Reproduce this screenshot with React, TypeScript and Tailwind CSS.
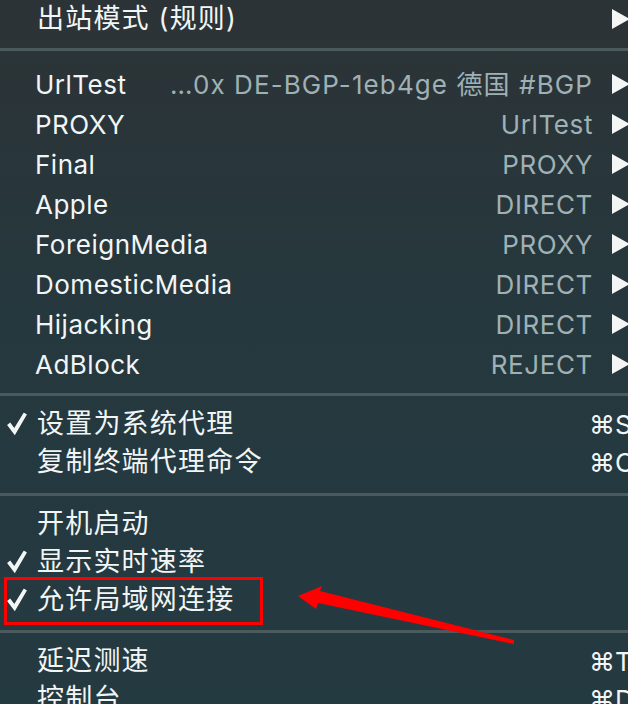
import React from "react";

const FONT = { fontFamily: 'Inter, "Noto Sans CJK SC", "Noto Sans", sans-serif' };

function Check() {
  return (
    <svg width="20" height="23" viewBox="0 0 19 22" className="absolute left-[7px] top-1/2 -translate-y-1/2">
      <path d="M0 12 L3 9.6 L6.9 14.8 L16 0 L19 1.9 L7.4 21.8 Z" fill="#f4f6f6" />
    </svg>
  );
}

function Tri() {
  return (
    <svg width="18" height="20" viewBox="0 0 18 20" className="shrink-0">
      <path d="M0 0 L18 10 L0 20 Z" fill="#f4f6f6" />
    </svg>
  );
}

function Sep({ mt, mb }: { mt: string; mb: string }) {
  return <div className={`h-[3px] bg-[#4b5a5d] ${mt} ${mb}`} />;
}

function ProxyRow({ label, value, wide }: { label: string; value: string; wide?: boolean }) {
  return (
    <div className="flex h-[40px] items-center">
      <div className="w-[35px] shrink-0" />
      <span className="text-[26px] text-[#f2f5f5] whitespace-nowrap tracking-[0.5px]">{label}</span>
      <div className="flex-1" />
      <span
        className={`text-[26px] text-[#9fb1b4] whitespace-nowrap ${wide ? "tracking-[1.1px]" : "tracking-[0.6px]"}`}
      >
        {value}
      </span>
      <div className="w-[19px] shrink-0" />
      <Tri />
      <div className="w-[30px] shrink-0" />
    </div>
  );
}

function CnRow({ label, checked, shortcut }: { label: string; checked?: boolean; shortcut?: string }) {
  return (
    <div className="relative flex h-[38px] items-center">
      {checked && <Check />}
      <div className="w-[37px] shrink-0" />
      <span className="text-[27px] text-[#f2f5f5] whitespace-nowrap tracking-[1.2px]">{label}</span>
      <div className="flex-1" />
      {shortcut && (
        <span className="w-[71px] shrink-0 text-[26px] text-[#f2f5f5] whitespace-nowrap">{shortcut}</span>
      )}
      {!shortcut && <div className="w-[71px] shrink-0" />}
    </div>
  );
}

export default function App() {
  return (
    <div
      className="relative w-[628px] h-[704px] overflow-hidden bg-gradient-to-b from-[#2c3336] via-[#25383e] via-45% to-[#243a41]"
      style={FONT}
    >
      <div className="w-[660px] flex flex-col">
        {/* top row */}
        <div className="flex h-[38px] items-center">
          <div className="w-[37px] shrink-0" />
          <span className="text-[27px] text-[#f2f5f5] whitespace-nowrap tracking-[1.2px]">出站模式 (规则)</span>
          <div className="flex-1" />
          <Tri />
          <div className="w-[30px] shrink-0" />
        </div>
        <Sep mt="mt-[10px]" mb="mb-[13px]" />
        <ProxyRow label="UrlTest" value="…0x DE-BGP-1eb4ge 德国 #BGP" wide />
        <ProxyRow label="PROXY" value="UrlTest" />
        <ProxyRow label="Final" value="PROXY" />
        <ProxyRow label="Apple" value="DIRECT" />
        <ProxyRow label="ForeignMedia" value="PROXY" />
        <ProxyRow label="DomesticMedia" value="DIRECT" />
        <ProxyRow label="Hijacking" value="DIRECT" />
        <ProxyRow label="AdBlock" value="REJECT" />
        <Sep mt="mt-[9px]" mb="mb-[9px]" />
        <CnRow label="设置为系统代理" checked shortcut="⌘S" />
        <CnRow label="复制终端代理命令" shortcut="⌘C" />
        <Sep mt="mt-[12px]" mb="mb-[9px]" />
        <CnRow label="开机启动" />
        <CnRow label="显示实时速率" checked />
        <CnRow label="允许局域网连接" checked />
        <Sep mt="mt-[11px]" mb="mb-[9px]" />
        <CnRow label="延迟测速" shortcut="⌘T" />
        <CnRow label="控制台" shortcut="⌘D" />
      </div>

      {/* annotation overlay */}
      <div className="absolute left-[4px] top-[577px] w-[259px] h-[48px] border-[3px] border-[#ff0000]" />
      <svg className="absolute left-0 top-0" width="628" height="704" viewBox="0 0 628 704">
        <path
          d="M298 596 L322 586 L320 591 L514 640 L514 644 L318 603 L316 609 Z"
          fill="#ff0000"
        />
      </svg>
    </div>
  );
}
